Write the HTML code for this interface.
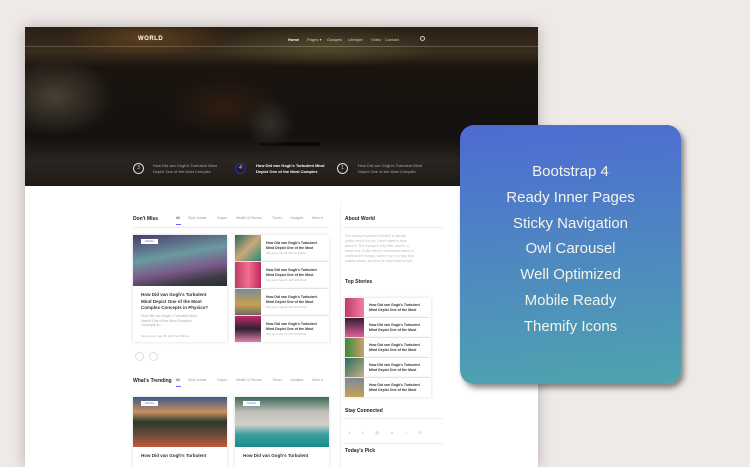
<!DOCTYPE html>
<html><head><meta charset="utf-8"><style>
*{margin:0;padding:0;box-sizing:border-box}
body{width:750px;height:460px;overflow:hidden;background:#efe9e7;font-family:"Liberation Sans",sans-serif;position:relative}
.page{position:absolute;left:25px;top:27px;width:513px;height:440px;background:#fff;box-shadow:0 0 14px rgba(0,0,0,.25);overflow:hidden}
.hero{position:absolute;left:0;top:0;width:513px;height:159px;background:
radial-gradient(ellipse 60px 40px at 30px 70px,rgba(120,110,90,.5),transparent),
radial-gradient(ellipse 80px 20px at 120px 10px,rgba(140,90,30,.5),transparent),
radial-gradient(ellipse 120px 20px at 300px 20px,rgba(110,100,60,.5),transparent),
radial-gradient(ellipse 60px 30px at 200px 80px,rgba(90,50,20,.35),transparent),
linear-gradient(#2a2016 0,#3a2c1c 25px,#1a140e 40px,#141110 110px,#2a2520 135px,#1e1a16 159px)}
.t{position:absolute;font-size:4px;color:#ddd}
.w{position:absolute;left:113px;top:9px;font-size:6px;font-weight:bold;color:#fff;letter-spacing:.5px}
.nav{position:absolute;top:10px;font-size:4px;color:#ccc}
.c{position:absolute;width:11px;height:11px;border:1px solid #ddd;border-radius:50%;color:#ddd;font-size:5px;text-align:center;line-height:9px;top:136px}
.h{position:absolute;font-size:5px;font-weight:bold;color:#222}
.tab{position:absolute;font-size:3.5px;color:#999}
.card{position:absolute;background:#fff;box-shadow:0 0 3px rgba(0,0,0,.15)}
.ln{position:absolute;font-size:4px;font-weight:bold;color:#333;line-height:5px}
.sm{position:absolute;font-size:3px;color:#aaa}
.promo{position:absolute;left:460px;top:125px;width:221px;height:259px;border-radius:14px;background:linear-gradient(175deg,#4d6bd3,#4ea4ae);box-shadow:3px 4px 6px rgba(0,0,0,.45);color:#f4f4e8;text-align:center;font-size:15px;padding-top:38px}
.promo div{height:25.8px}
</style></head><body>
<div class="page">
 <div class="hero">
  <div class="w">WORLD</div>
  <div class="nav" style="left:263px;color:#fff;font-weight:bold">Home</div>
  <div class="nav" style="left:282px">Pages ▾</div>
  <div class="nav" style="left:302px">Gadgets</div>
  <div class="nav" style="left:323px">Lifestyle</div>
  <div class="nav" style="left:346px">Video</div>
  <div class="nav" style="left:360px">Contact</div>
  <div style="position:absolute;left:395px;top:9px;width:5px;height:5px;border:1px solid #ccc;border-radius:50%"></div>
  <div style="position:absolute;left:0;right:0;top:19px;height:1px;background:rgba(255,255,255,.2)"></div>
  <div style="position:absolute;left:235px;top:115px;width:60px;height:4px;background:#000;opacity:.6"></div>
  <div style="position:absolute;left:220px;top:72px;width:50px;height:50px;background:radial-gradient(ellipse,#33302a,transparent 70%)"></div>
  <div class="c" style="left:108px">3</div>
  <div class="c" style="left:210px;border-color:#22f;">4</div>
  <div class="c" style="left:312px">1</div>
  <div class="t" style="left:128px;top:136px;line-height:6px;color:#aaa">How Did van Gogh's Turbulent Mind<br>Depict One of the Most Complex</div>
  <div class="t" style="left:231px;top:136px;line-height:6px;color:#fff;font-weight:bold">How Did van Gogh's Turbulent Mind<br>Depict One of the Most Complex</div>
  <div class="t" style="left:333px;top:136px;line-height:6px;color:#aaa">How Did van Gogh's Turbulent Mind<br>Depict One of the Most Complex</div>
 </div>
 <div class="h" style="left:108px;top:189px">Don't Miss</div>
 <div class="tab" style="left:151px;top:189px;color:#333">All</div>
 <div style="position:absolute;left:151px;top:197px;width:5px;height:1px;background:#66f"></div>
 <div class="tab" style="left:163px;top:189px">Style hunter</div>
 <div class="tab" style="left:192px;top:189px">Vogue</div>
 <div class="tab" style="left:211px;top:189px">Health &amp; Fitness</div>
 <div class="tab" style="left:247px;top:189px">Travel</div>
 <div class="tab" style="left:265px;top:189px">Gadgets</div>
 <div class="tab" style="left:287px;top:189px">More ▾</div>
 <div style="position:absolute;left:108px;top:200px;width:196px;height:1px;background:#eee"></div>
 <div class="card" style="left:108px;top:208px;width:94px;height:107px">
  <div style="height:51px;background:linear-gradient(170deg,#4b3a6a,#6a9aa0 40%,#7a5a8a 65%,#3a3a40 85%,#25303a)"></div>
  <div style="position:absolute;left:8px;top:4px;width:17px;height:5px;background:#fff;font-size:2.5px;color:#66f;text-align:center;line-height:5px">TRAVEL</div>
  <div class="ln" style="left:8px;top:57px;font-size:4.5px;line-height:6.5px">How Did van Gogh's Turbulent<br>Mind Depict One of the Most<br>Complex Concepts in Physics?</div>
  <div class="sm" style="left:8px;top:79px;line-height:4.5px;font-size:3.5px">How Did van Gogh's Turbulent Mind<br>Depict One of the Most Complex<br>Concepts in...</div>
  <div class="sm" style="left:8px;top:99px">Katy Liu on Sep 29, 2017 at 9:48 am</div>
 </div>
 <div class="card" style="left:210px;top:208px;width:94px;height:26px"><div style="width:26px;height:26px;background:linear-gradient(135deg,#2a6a5a,#c9a87a,#2a8a7a)"></div><div class="ln" style="left:31px;top:6px;font-size:3.5px;line-height:4.5px">How Did van Gogh's Turbulent<br>Mind Depict One of the Most</div><div class="sm" style="left:31px;top:17px;font-size:2.5px">Katy Liu on Sep 29, 2017 at 9:48 am</div></div>
 <div class="card" style="left:210px;top:235px;width:94px;height:26px"><div style="width:26px;height:26px;background:linear-gradient(90deg,#c03a6a,#f07090,#c02a5a)"></div><div class="ln" style="left:31px;top:6px;font-size:3.5px;line-height:4.5px">How Did van Gogh's Turbulent<br>Mind Depict One of the Most</div><div class="sm" style="left:31px;top:17px;font-size:2.5px">Katy Liu on Sep 29, 2017 at 9:48 am</div></div>
 <div class="card" style="left:210px;top:262px;width:94px;height:26px"><div style="width:26px;height:26px;background:linear-gradient(#7a8a9a,#c9a050 60%,#6a6a6a)"></div><div class="ln" style="left:31px;top:6px;font-size:3.5px;line-height:4.5px">How Did van Gogh's Turbulent<br>Mind Depict One of the Most</div><div class="sm" style="left:31px;top:17px;font-size:2.5px">Katy Liu on Sep 29, 2017 at 9:48 am</div></div>
 <div class="card" style="left:210px;top:289px;width:94px;height:26px"><div style="width:26px;height:26px;background:linear-gradient(#c02a6a,#302030 50%,#e080b0)"></div><div class="ln" style="left:31px;top:6px;font-size:3.5px;line-height:4.5px">How Did van Gogh's Turbulent<br>Mind Depict One of the Most</div><div class="sm" style="left:31px;top:17px;font-size:2.5px">Katy Liu on Sep 29, 2017 at 9:48 am</div></div>
 <div style="position:absolute;left:110px;top:325px;width:9px;height:9px;border:1px solid #ddd;border-radius:50%"></div>
 <div style="position:absolute;left:124px;top:325px;width:9px;height:9px;border:1px solid #ddd;border-radius:50%"></div>
 <div class="h" style="left:108px;top:351px">What's Trending</div>
 <div class="tab" style="left:151px;top:351px;color:#333">All</div>
 <div style="position:absolute;left:151px;top:359px;width:5px;height:1px;background:#66f"></div>
 <div class="tab" style="left:163px;top:351px">Style hunter</div>
 <div class="tab" style="left:192px;top:351px">Vogue</div>
 <div class="tab" style="left:211px;top:351px">Health &amp; Fitness</div>
 <div class="tab" style="left:247px;top:351px">Travel</div>
 <div class="tab" style="left:265px;top:351px">Gadgets</div>
 <div class="tab" style="left:287px;top:351px">More ▾</div>
 <div class="card" style="left:108px;top:370px;width:94px;height:70px"><div style="height:50px;background:linear-gradient(#3a5a8a,#c99060 30%,#2a3a2a 50%,#6a4a3a 75%,#c05a3a)"></div><div style="position:absolute;left:8px;top:4px;width:17px;height:5px;background:#fff;font-size:2.5px;color:#66f;text-align:center;line-height:5px">TRAVEL</div><div class="ln" style="left:8px;top:56px;font-size:4.5px">How Did van Gogh's Turbulent</div></div>
 <div class="card" style="left:210px;top:370px;width:94px;height:70px"><div style="height:50px;background:linear-gradient(#3a6a5a,#c0c0b8 30%,#d0d0c8 55%,#3aa0a0 75%,#1a8a8a)"></div><div style="position:absolute;left:8px;top:4px;width:17px;height:5px;background:#fff;font-size:2.5px;color:#66f;text-align:center;line-height:5px">TRAVEL</div><div class="ln" style="left:8px;top:56px;font-size:4.5px">How Did van Gogh's Turbulent</div></div>
 <div style="position:absolute;left:315px;top:175px;width:1px;height:280px;background:#f0f0f0"></div>
 <div class="h" style="left:320px;top:189px">About World</div>
 <div style="position:absolute;left:318px;top:200px;width:100px;height:1px;background:#eee"></div>
 <div class="sm" style="left:320px;top:207px;font-size:3.5px;line-height:5px;color:#bbb">The mango is perfect in that it is always<br>yellow and if it's not, I don't want to hear<br>about it. The mango's only flaw, and it's a<br>minor one, is the effort it sometimes takes to<br>undress the mango, carve it up in a way that<br>makes sense, and find its way to the mouth.</div>
 <div class="h" style="left:320px;top:252px">Top Stories</div>
 <div class="card" style="left:320px;top:271px;width:86px;height:19px"><div style="width:19px;height:19px;background:linear-gradient(90deg,#c03a6a,#f080a0)"></div><div class="ln" style="left:24px;top:5px;font-size:3.5px;line-height:4.5px">How Did van Gogh's Turbulent<br>Mind Depict One of the Most</div></div>
 <div class="card" style="left:320px;top:291px;width:86px;height:19px"><div style="width:19px;height:19px;background:linear-gradient(#302030,#e060a0)"></div><div class="ln" style="left:24px;top:5px;font-size:3.5px;line-height:4.5px">How Did van Gogh's Turbulent<br>Mind Depict One of the Most</div></div>
 <div class="card" style="left:320px;top:311px;width:86px;height:19px"><div style="width:19px;height:19px;background:linear-gradient(90deg,#3a8a3a,#c9a070)"></div><div class="ln" style="left:24px;top:5px;font-size:3.5px;line-height:4.5px">How Did van Gogh's Turbulent<br>Mind Depict One of the Most</div></div>
 <div class="card" style="left:320px;top:331px;width:86px;height:19px"><div style="width:19px;height:19px;background:linear-gradient(135deg,#2a6a5a,#c9b08a)"></div><div class="ln" style="left:24px;top:5px;font-size:3.5px;line-height:4.5px">How Did van Gogh's Turbulent<br>Mind Depict One of the Most</div></div>
 <div class="card" style="left:320px;top:351px;width:86px;height:19px"><div style="width:19px;height:19px;background:linear-gradient(#7a8a9a,#c9a050)"></div><div class="ln" style="left:24px;top:5px;font-size:3.5px;line-height:4.5px">How Did van Gogh's Turbulent<br>Mind Depict One of the Most</div></div>
 <div class="h" style="left:320px;top:381px">Stay Connected</div>
 <div style="position:absolute;left:318px;top:391px;width:100px;height:1px;background:#eee"></div>
 <div class="sm" style="left:324px;top:403px;font-size:4px;word-spacing:11px;color:#999">f t ◎ v ▫ G</div>
 <div style="position:absolute;left:318px;top:416px;width:100px;height:1px;background:#eee"></div>
 <div class="h" style="left:320px;top:421px">Today's Pick</div>
</div>
<div class="promo"><div>Bootstrap 4</div><div>Ready Inner Pages</div><div>Sticky Navigation</div><div>Owl Carousel</div><div>Well Optimized</div><div>Mobile Ready</div><div>Themify Icons</div></div>
</body></html>
